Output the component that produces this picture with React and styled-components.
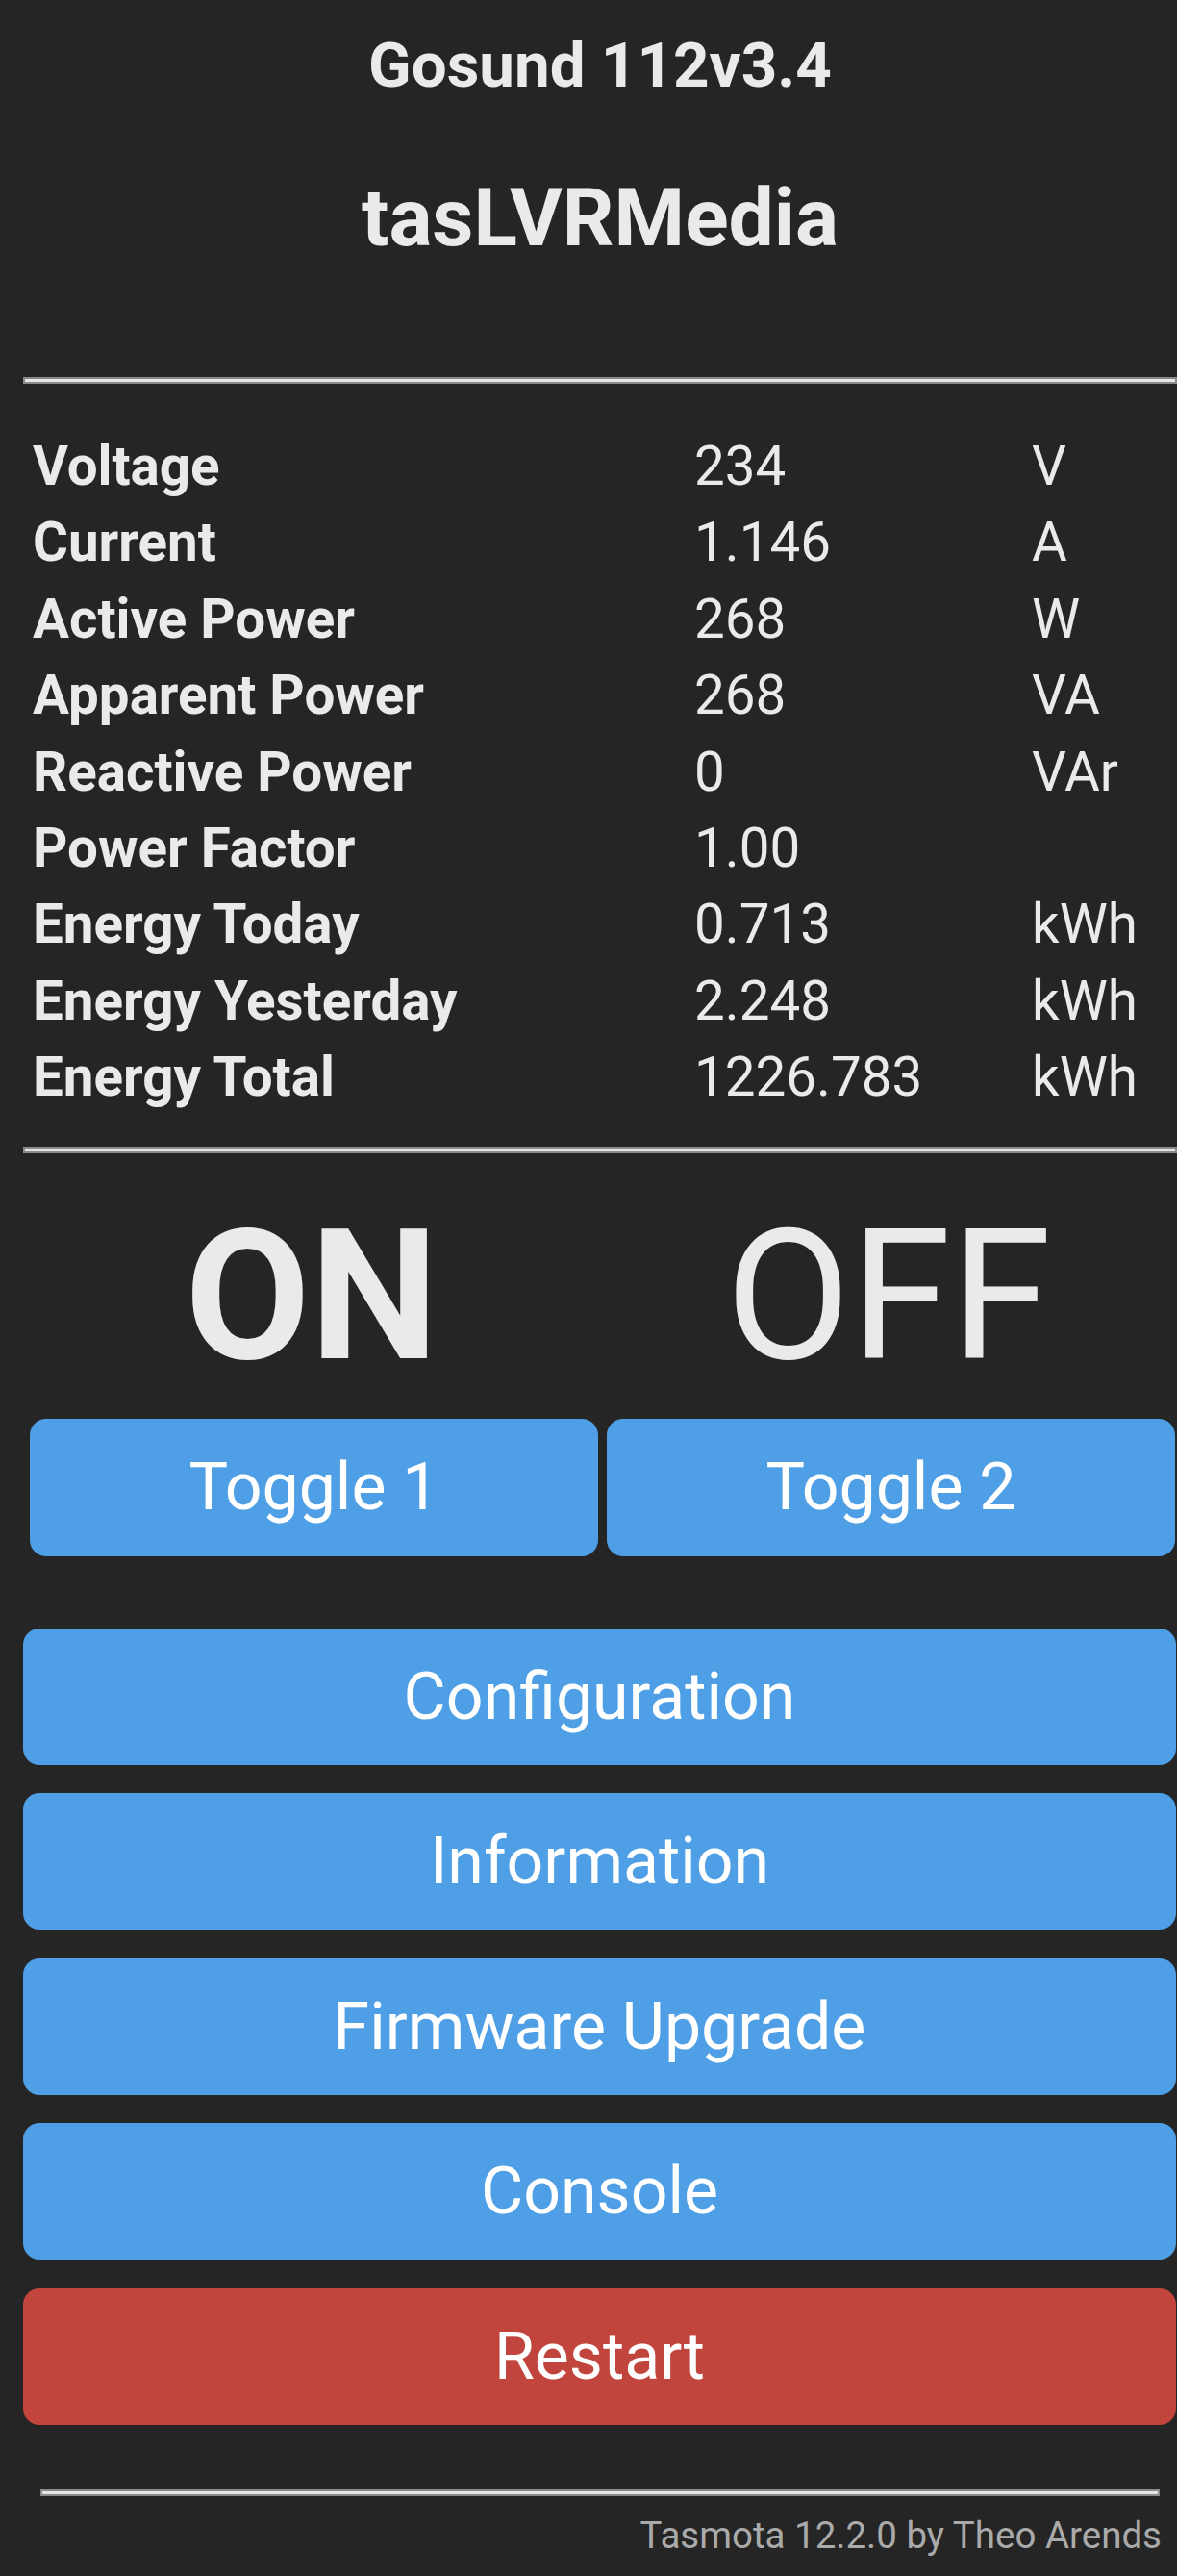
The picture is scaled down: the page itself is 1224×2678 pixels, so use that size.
import React from "react";
import styled, { createGlobalStyle } from "styled-components";

const GlobalStyle = createGlobalStyle`
  html, body {
    margin: 0;
    padding: 0;
    background: #252525;
  }
  body {
    font-family: Roboto, "Liberation Sans", sans-serif;
    color: #eaeaea;
    min-height: 2678px;
  }
`;

const Page = styled.div`
  width: 1200px;
  padding-left: 24px;
  display: flex;
  flex-direction: column;
`;

const Header = styled.div`
  display: flex;
  flex-direction: column;
  align-items: center;
  padding-top: 30px;
`;

const DeviceModel = styled.h3`
  margin: 0;
  font-size: 65.5px;
  line-height: 76px;
  font-weight: 700;
`;

const DeviceName = styled.h2`
  margin: 72px 0 0;
  font-size: 84px;
  line-height: 98px;
  font-weight: 700;
`;

const Rule = styled.div`
  height: 3px;
  border: 2px solid #8a8a8a;
  background: #e6e6e6;
  margin-top: ${(p) => p.$top}px;
  margin-left: ${(p) => p.$inset || 0}px;
  margin-right: ${(p) => p.$inset || 0}px;
`;

const SensorTable = styled.div`
  display: grid;
  grid-template-columns: 688px 351px 1fr;
  padding-left: 10px;
  margin-top: 47px;
  font-size: 56.5px;
  line-height: 79.4px;
`;

const Label = styled.div`
  font-weight: 700;
  white-space: nowrap;
`;

const Value = styled.div`
  font-weight: 400;
  white-space: nowrap;
`;

const StateRow = styled.div`
  display: grid;
  grid-template-columns: 1fr 1fr;
  margin-top: 38px;
`;

const State = styled.div`
  text-align: center;
  font-size: 189px;
  line-height: 221px;
  font-weight: ${(p) => (p.$on ? 700 : 400)};
`;

const ToggleRow = styled.div`
  display: grid;
  grid-template-columns: 1fr 1fr;
  gap: 9px;
  padding: 0 2px 0 7px;
  margin-top: 17px;
`;

const Button = styled.button`
  display: flex;
  align-items: center;
  justify-content: center;
  width: 100%;
  height: ${(p) => p.$height || 142}px;
  border: 0;
  border-radius: 17px;
  background: ${(p) => (p.$danger ? "#c1443d" : "#4e9fe5")};
  color: #fff;
  font-family: Roboto, "Liberation Sans", sans-serif;
  font-size: 68px;
  font-weight: 400;
  padding: 0;
`;

const Menu = styled.div`
  display: flex;
  flex-direction: column;
  gap: 29.5px;
  margin-top: 75px;
  padding-right: 1px;
`;

const Footer = styled.div`
  display: flex;
  flex-direction: column;
  margin-top: 67px;
`;

const Credit = styled.div`
  align-self: flex-end;
  margin-right: 16px;
  margin-top: 18px;
  font-size: 38.5px;
  line-height: 45px;
  color: #aaa;
`;

const readings = [
  ["Voltage", "234", "V"],
  ["Current", "1.146", "A"],
  ["Active Power", "268", "W"],
  ["Apparent Power", "268", "VA"],
  ["Reactive Power", "0", "VAr"],
  ["Power Factor", "1.00", ""],
  ["Energy Today", "0.713", "kWh"],
  ["Energy Yesterday", "2.248", "kWh"],
  ["Energy Total", "1226.783", "kWh"],
];

const menu = ["Configuration", "Information", "Firmware Upgrade", "Console"];

export default function App() {
  return (
    <>
      <GlobalStyle />
      <Page>
        <Header>
          <DeviceModel>Gosund 112v3.4</DeviceModel>
          <DeviceName>tasLVRMedia</DeviceName>
        </Header>
        <Rule $top={116} />
        <SensorTable>
          {readings.map(([label, value, unit]) => (
            <React.Fragment key={label}>
              <Label>{label}</Label>
              <Value>{value}</Value>
              <Value>{unit}</Value>
            </React.Fragment>
          ))}
        </SensorTable>
        <Rule $top={31} />
        <StateRow>
          <State $on>ON</State>
          <State>OFF</State>
        </StateRow>
        <ToggleRow>
          <Button $height={143}>Toggle 1</Button>
          <Button $height={143}>Toggle 2</Button>
        </ToggleRow>
        <Menu>
          {menu.map((item) => (
            <Button key={item}>{item}</Button>
          ))}
          <Button $danger>Restart</Button>
        </Menu>
        <Footer>
          <Rule $top={0} $inset={18} />
          <Credit>Tasmota 12.2.0 by Theo Arends</Credit>
        </Footer>
      </Page>
    </>
  );
}
